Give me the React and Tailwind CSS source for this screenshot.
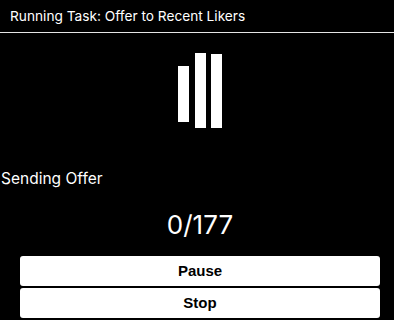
import React from 'react';

const Bars = () => (
  <svg width="44" height="75" viewBox="0 0 44 75" fill="#fff">
    <rect x="0" y="13" width="11" height="56" />
    <rect x="17" y="0" width="11" height="75" />
    <rect x="33" y="1" width="11" height="74" />
  </svg>
);

const App = () => {
  return (
    <div className="w-[394px] h-[320px] bg-black text-white overflow-hidden" style={{ fontFamily: 'Inter, sans-serif' }}>
      <div className="h-[33px] flex items-center px-[10px] text-[13.7px] border-b border-[#e5e5e5]">
        Running Task: Offer to Recent Likers
      </div>

      <div className="flex justify-center pl-[6px] mt-[20px]">
        <Bars />
      </div>

      <div className="mt-[40px] pl-px text-[15.5px] leading-[22px]">Sending Offer</div>

      <div className="mt-[18px] text-center pl-[6px] text-[26px] leading-[34px]">0/177</div>

      <div className="mt-[14px] pl-[20px] pr-[14px] flex flex-col gap-[2px]" style={{ fontFamily: '"Liberation Sans", Arial, sans-serif' }}>
        <button className="h-[30px] bg-white text-black rounded-[3px] font-bold text-[15px]">Pause</button>
        <button className="h-[30px] bg-white text-black rounded-[3px] font-bold text-[15px]">Stop</button>
      </div>
    </div>
  );
};

export default App;
